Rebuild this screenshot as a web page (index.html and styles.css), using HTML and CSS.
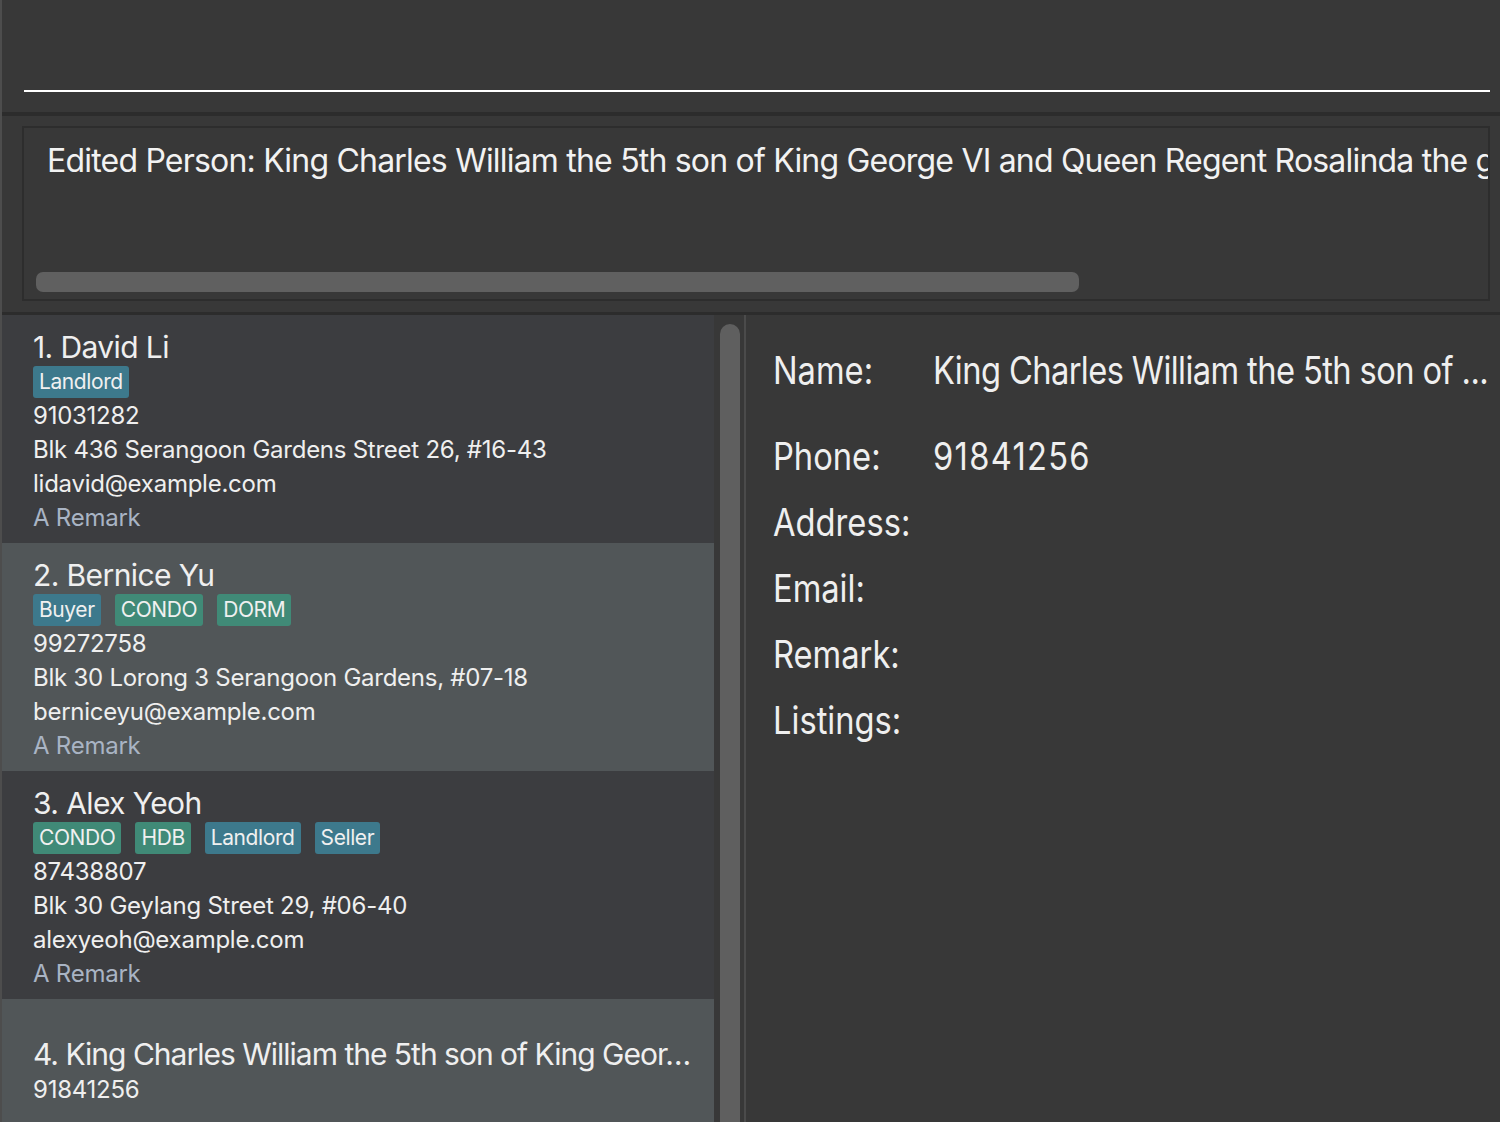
FILE: index.html
```html
<!DOCTYPE html>
<html lang="en">
<head>
<meta charset="utf-8">
<title>Address Book</title>
<link rel="stylesheet" href="styles.css">
</head>
<body>
<div class="app">
  <div class="command-bar">
    <div class="command-input"></div>
  </div>
  <div class="sep"></div>
  <div class="result-area">
    <div class="result-box">
      <div class="result-text">Edited Person: King Charles William the 5th son of King George VI and Queen Regent Rosalinda the great</div>
      <div class="hscroll"><div class="hthumb"></div></div>
    </div>
  </div>
  <div class="sep sep-thin"></div>
  <div class="main">
    <div class="list">
      <div class="card">
        <div class="card-name">1. David Li</div>
        <div class="tags"><span class="tag tag-role">Landlord</span></div>
        <div class="card-line">91031282</div>
        <div class="card-line">Blk 436 Serangoon Gardens Street 26, #16-43</div>
        <div class="card-line">lidavid@example.com</div>
        <div class="card-line card-remark">A Remark</div>
      </div>
      <div class="card card-alt">
        <div class="card-name">2. Bernice Yu</div>
        <div class="tags"><span class="tag tag-role">Buyer</span><span class="tag tag-prop">CONDO</span><span class="tag tag-prop">DORM</span></div>
        <div class="card-line">99272758</div>
        <div class="card-line">Blk 30 Lorong 3 Serangoon Gardens, #07-18</div>
        <div class="card-line">berniceyu@example.com</div>
        <div class="card-line card-remark">A Remark</div>
      </div>
      <div class="card">
        <div class="card-name">3. Alex Yeoh</div>
        <div class="tags"><span class="tag tag-prop">CONDO</span><span class="tag tag-prop">HDB</span><span class="tag tag-role">Landlord</span><span class="tag tag-role">Seller</span></div>
        <div class="card-line">87438807</div>
        <div class="card-line">Blk 30 Geylang Street 29, #06-40</div>
        <div class="card-line">alexyeoh@example.com</div>
        <div class="card-line card-remark">A Remark</div>
      </div>
      <div class="card card-alt card-sparse">
        <div class="card-name">4. King Charles William the 5th son of King Geor…</div>
        <div class="card-line">91841256</div>
      </div>
    </div>
    <div class="vscroll"><div class="vthumb"></div></div>
    <div class="divider"></div>
    <div class="detail">
      <div class="detail-row detail-row-first">
        <div class="detail-label"><span class="squeeze">Name:</span></div>
        <div class="detail-value"><span class="squeeze">King Charles William the 5th son of ...</span></div>
      </div>
      <div class="detail-row">
        <div class="detail-label"><span class="squeeze">Phone:</span></div>
        <div class="detail-value detail-digits"><span class="squeeze">91841256</span></div>
      </div>
      <div class="detail-row">
        <div class="detail-label"><span class="squeeze">Address:</span></div>
        <div class="detail-value"></div>
      </div>
      <div class="detail-row">
        <div class="detail-label"><span class="squeeze">Email:</span></div>
        <div class="detail-value"></div>
      </div>
      <div class="detail-row">
        <div class="detail-label"><span class="squeeze">Remark:</span></div>
        <div class="detail-value"></div>
      </div>
      <div class="detail-row">
        <div class="detail-label"><span class="squeeze">Listings:</span></div>
        <div class="detail-value"></div>
      </div>
    </div>
  </div>
</div>
</body>
</html>
```

FILE: styles.css
```css
* { box-sizing: border-box; }

html, body {
  margin: 0;
  padding: 0;
  width: 1500px;
  height: 1122px;
  overflow: hidden;
  background: #383838;
  font-family: Inter, "Noto Sans", sans-serif;
  color: #efefef;
}

.app {
  height: 1122px;
  border-left: 2px solid #4d4d4d;
  display: flex;
  flex-direction: column;
  overflow: hidden;
}

.command-bar {
  height: 112px;
  padding: 0 10px 0 22px;
  flex: none;
}

.command-input {
  height: 92px;
  border-bottom: 2px solid #ffffff;
}

.sep {
  height: 4px;
  background: #2c2c2c;
  flex: none;
}

.sep-thin {
  height: 3px;
}

.result-area {
  height: 196px;
  padding: 10px 10px 0 20px;
  flex: none;
}

.result-box {
  height: 175px;
  border: 2px solid #2d2d2d;
  display: flex;
  flex-direction: column;
  justify-content: space-between;
  overflow: hidden;
}

.result-text {
  padding: 12px 0 0 23px;
  font-size: 32px;
  line-height: 42px;
  white-space: nowrap;
  overflow: hidden;
  color: #f2f2f2;
  letter-spacing: -0.8px;
}

.hscroll {
  padding: 0 0 7px 12px;
}

.hthumb {
  width: 1043px;
  height: 20px;
  border-radius: 7px;
  background: #606060;
}

.main {
  flex: 1;
  display: flex;
  min-height: 0;
}

.list {
  width: 712px;
  flex: none;
  background: #3c3d40;
  overflow: hidden;
}

.card {
  height: 228px;
  padding: 13px 0 10px 31px;
  background: #3c3d40;
}

.card-alt {
  background: #515658;
}

.card-sparse {
  padding-top: 36px;
}

.card-name {
  font-size: 30px;
  line-height: 38px;
  white-space: nowrap;
  letter-spacing: -0.6px;
}

.card-sparse .card-name {
  letter-spacing: -1px;
}

.tags {
  display: flex;
  gap: 14px;
  height: 32px;
  margin: 0 0 1px 0;
}

.tag {
  display: inline-block;
  height: 32px;
  line-height: 32px;
  padding: 0 6px;
  border-radius: 3px;
  font-size: 21px;
  color: #f0f0f0;
  letter-spacing: -0.4px;
}

.tag-role {
  background: #3d798c;
}

.tag-prop {
  background: #408a77;
}

.card-line {
  font-size: 24px;
  line-height: 34px;
  white-space: nowrap;
  letter-spacing: -0.25px;
}

.card-remark {
  color: #a9b4c4;
}

.vscroll {
  width: 30px;
  flex: none;
  padding: 9px 4px 0 6px;
  background: #383838;
}

.vthumb {
  height: 100%;
  border-radius: 10px 10px 0 0;
  background: #5f5f5f;
}

.divider {
  width: 2px;
  flex: none;
  background: #4b4b4b;
}

.detail {
  flex: 1;
  min-width: 0;
  overflow: hidden;
  padding: 30px 0 0 27px;
  background: #383838;
}

.detail-row {
  display: flex;
  height: 66px;
  align-items: center;
}

.detail-row-first {
  height: 78px;
  align-items: flex-start;
}

.detail-label {
  width: 160px;
  flex: none;
  font-size: 38px;
  line-height: 50px;
}

.detail-value {
  font-size: 38px;
  line-height: 50px;
  white-space: nowrap;
  letter-spacing: -0.7px;
}

.detail-digits {
  letter-spacing: 1.5px;
}

.squeeze {
  display: inline-block;
  transform: scaleX(0.86);
  transform-origin: left center;
}
```
